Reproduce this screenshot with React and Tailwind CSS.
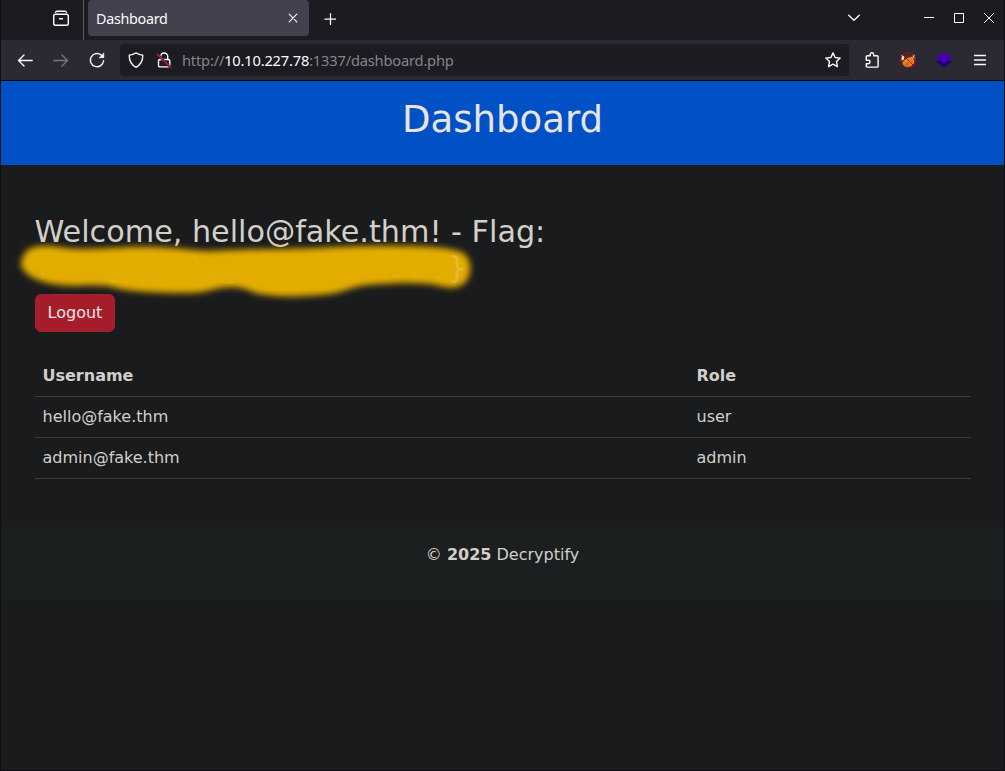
const users = [
  { name: 'hello@fake.thm', role: 'user' },
  { name: 'admin@fake.thm', role: 'admin' },
];

function Icon({ children, className = '', size = 16 }) {
  return (
    <svg
      width={size}
      height={size}
      viewBox={`0 0 ${size} ${size}`}
      fill="none"
      stroke="currentColor"
      strokeWidth="1.4"
      strokeLinecap="round"
      strokeLinejoin="round"
      className={`shrink-0 ${className}`}
    >
      {children}
    </svg>
  );
}

function TabBar() {
  return (
    <div className="flex h-10 items-start bg-[#1c1b22] pl-[51px]">
      <div className="flex h-9 w-[31px] items-center">
        <Icon size={18}>
          <rect x="1.7" y="5.3" width="14.6" height="11" rx="1.8" />
          <path d="M3.6 3.3Q4.1 2.3 5.3 2.3h7.400q1.200 0 1.700 1" />
          <path d="M7.5 9.7h3" />
        </Icon>
      </div>
      <div className="h-10 w-px bg-[#5b5a62]" />
      <div className="ml-1 flex h-9 w-[221px] items-center justify-between rounded bg-[#42414d] pl-2 pr-[11px]">
        <span className="pt-px text-[14.3px] tracking-[-0.28px]">Dashboard</span>
        <Icon size={10}>
          <path d="m1.2 1.2 7.6 7.6M8.8 1.2 1.2 8.8" strokeWidth="1.1" />
        </Icon>
      </div>
      <div className="ml-[15px] flex h-9 w-4 items-center">
        <Icon size={12} className="mt-px">
          <path d="M6.500 .7v10.800M1 6.200h11" strokeWidth="1.300" />
        </Icon>
      </div>
      <div className="ml-auto flex h-9 items-center pr-[10px]">
        <Icon size={14} className="mr-[63px]">
          <path d="m1.7 4.2 5.3 5 5.3-5" />
        </Icon>
        <svg width="10" height="10" className="mr-5" stroke="white"><path d="M0 4.5h10" /></svg>
        <svg width="10" height="10" className="mr-5" fill="none" stroke="white"><path d="M.5.5h9v9h-9z" /></svg>
        <svg width="10" height="10" fill="none" stroke="white"><path d="m0 0 10 10M10 0 0 10" /></svg>
      </div>
    </div>
  );
}

function Toolbar() {
  return (
    <div className="flex h-[41px] items-center border-b border-[#0c0c0d] bg-[#2b2a33] pl-4 pr-[15px]">
      <Icon className="mr-5">
        <path d="M15.2 8.500H1.5M7 3 1.5 8.500 7 14" />
      </Icon>
      <Icon className="mr-5 text-[#77767e]">
        <path d="M.8 8.500h13.7M9 3 14.5 8.500 9 14" />
      </Icon>
      <Icon>
        <path d="M14.600 8.800A6.600 6.600 0 1 1 12.200 3l1.400 1.300" />
        <path d="M14.800 1.300v4.400h-4.400Z" fill="currentColor" strokeWidth=".6" />
      </Icon>
      <div className="ml-[15px] flex h-8 w-[729px] shrink-0 items-center rounded bg-[#1c1b22] pl-2 pr-2">
        <Icon className="mr-3">
          <path d="M8 .9c2 1.4 4.2 2 6.7 2.2.3 5.7-1.7 9.6-6.7 12.2C3 12.700 1 8.800 1.300 3.100 3.800 2.900 6 2.300 8 .9Z" />
        </Icon>
        <Icon className="mr-[10px]">
          <path d="M4.700 7.500V4.500a3.500 3.500 0 0 1 7 0v3" />
          <rect x="2.500" y="7.500" width="11.300" height="7.400" rx="1.500" />
          <path d="m1.300 2.200 13.200 13.100" stroke="#1c1b22" strokeWidth="2.400" />
          <path d="m1.300 2.200 13.200 13.100" stroke="#e21648" strokeWidth="1.300" />
        </Icon>
        <div className="whitespace-nowrap text-[14.67px] tracking-[-0.19px] text-[#86858b]">
          http://<span className="text-[#fbfbfe]">10.10.227.78</span>:1337/dashboard.php
        </div>
        <Icon className="ml-auto">
          <path d="m8 .9 2.100 4.600 5.100.6-3.700 3.500.9 5-4.400-2.500-4.400 2.500.9-5L.8 6.100l5.100-.6Z" />
        </Icon>
      </div>
      <Icon className="ml-[15px]">
        <path d="M2.300 6.300V4.700q0-.9.900-.9h3V2.500a1.700 1.700 0 0 1 3.400 0v1.300h3.500q1 0 1 .9v9.500q0 .9-1 .9H3.200q-.9 0-.9-.9v-2.500h2a1.700 1.700 0 0 0 0-3.500h-2Z" />
      </Icon>
      <svg width="16" height="16" viewBox="0 0 16 16" className="ml-5">
        <path d="M5 7.500 8 5.600 12.500 4.500l1.700 3-.2 4-3.500 3.300-5 .2-3-2.500.2-2.600Z" fill="#e88417" />
        <path d="m1 3.200 2.200-.5 1.200 3-.9 2.300-2 .5Z" fill="#eee2d8" />
        <path d="m12.500 3.200 2-.7.800 4-2-1Z" fill="#eee2d8" />
        <path d="M3.700 3.600 8 2l3.700 1.500L10.500 5 5.800 6.200Z" fill="#3d3131" />
        <path d="m5 12 2.500-1.500 2 1-1 2-2.500.2ZM10 8.200l1.800-.7.800 1.300" fill="#a56b4b" />
        <circle cx="8" cy="8" r="7.400" fill="none" stroke="#be080d" strokeWidth="1" />
        <path d="m2.800 2.800 10.500 10.500" stroke="#be080d" strokeWidth="1" />
      </svg>
      <svg width="16" height="16" viewBox="0 0 16 16" className="ml-5">
        <path d="M0 10 8 5l8 5-8 5.600Z" fill="#210075" />
        <path d="m8 0 8 6.100-8 5.400-8-5.400Z" fill="#4400b4" />
      </svg>
      <Icon className="ml-5">
        <path d="M2.500 3.500h11M2.500 8h11M2.500 12.500h11" strokeWidth="1.300" />
      </Icon>
    </div>
  );
}

function Redaction() {
  return (
    <svg
      width="470"
      height="70"
      viewBox="10 235 470 70"
      className="absolute -left-[25px] top-[20px]"
    >
      <defs>
        <filter id="soft" x="-5%" y="-25%" width="110%" height="150%">
          <feGaussianBlur stdDeviation="3.200" />
        </filter>
      </defs>
      <path
        d="M21 265C22 253 30 247 42 247C54 246 64 250 81 250C108 250 128 247 157 248C183 249 196 252 211 252C236 251 258 250 280 250C315 250 350 246 402 247C430 247 454 249 463 254C470 259 472 269 469 277C464 290 452 290 440 287C427 284 417 284 402 284C382 285 369 285 356 288C342 292 337 295 320 296C296 298 276 298 260 295C247 292 246 288 230 288C213 289 203 295 184 294C156 294 128 293 108 287C88 285 75 288 60 286C43 284 23 278 21 265Z"
        fill="#e3ad03"
        filter="url(#soft)"
      />
      <path
        d="M43 278h1M111 281.500q2 2 5 1M194 258.500h2M227 283q4 2 8 0M371 278v.5M386 278v.5M394 277q3 2 6 0M414 277q4 2 8 0M437 278h1"
        stroke="#ecd078"
        strokeWidth="1.300"
        fill="none"
        opacity=".3"
        strokeLinecap="round"
      />
    </svg>
  );
}

export default function App() {
  return (
    <div className="flex h-[771px] w-[1005px] flex-col overflow-hidden border-x border-b border-[#0f0f13] bg-[#1a1b1c] font-['Noto_Sans',sans-serif] text-[#fbfbfe]">
      <TabBar />
      <Toolbar />
      <div className="flex-1 font-['DejaVu_Sans',sans-serif] text-base leading-6 text-[#d2cfc9]">
        <header className="h-[84px] bg-[#0250c5] pt-[17px] text-center text-[#e6e5e2]">
          <h1 className="text-[37.05px] leading-[1.2]">Dashboard</h1>
        </header>
        <main className="mx-auto mt-[49px] max-w-[960px] px-3">
          <div className="relative h-[80px]">
            <h2 className="text-[30.23px] leading-[36.200px]">Welcome, hello@fake.thm! - Flag:</h2>
            <Redaction />
            <span className="absolute left-[413px] top-[36px] text-[30.200px] leading-[36.200px] text-[#edc477] opacity-50">{'}'}</span>
          </div>
          <button className="block h-[38px] w-20 rounded-md border border-[#a92030] bg-[#a51d2b] pl-px text-[#e8e6e3]">Logout</button>
          <table className="mb-12 mt-6 w-full table-fixed border-collapse text-left">
            <colgroup>
              <col className="w-[654px]" />
              <col />
            </colgroup>
            <thead>
              <tr className="border-b border-[#3b3d3f]">
                <th className="p-2">Username</th>
                <th className="p-2">Role</th>
              </tr>
            </thead>
            <tbody>
              {users.map((user) => (
                <tr key={user.name} className="border-b border-[#3b3d3f]">
                  <td className="p-2">{user.name}</td>
                  <td className="p-2">{user.role}</td>
                </tr>
              ))}
            </tbody>
          </table>
        </main>
        <footer className="h-[72px] bg-[#1b1f1f] pt-4 text-center">
          © <strong>2025</strong> Decryptify
        </footer>
      </div>
    </div>
  );
}
